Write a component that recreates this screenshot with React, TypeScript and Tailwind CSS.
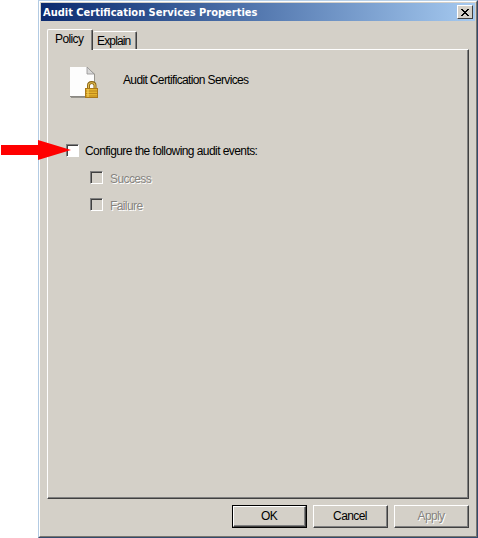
import React from "react";

type CheckProps = { label: string; disabled?: boolean; className: string };

function CheckRow({ label, disabled, className }: CheckProps) {
  return (
    <label className={`flex h-[13px] items-center ${className}`}>
      <span
        className={`block size-[13px] shrink-0 border border-t-[#808080] border-l-[#808080] border-r-white border-b-white ${disabled ? "bg-[#d4d0c8]" : "bg-white"}`}
      >
        <span className="block size-full border-t border-l border-[#404040]" />
      </span>
      <span
        className={`whitespace-nowrap leading-[13px] ${disabled ? "mt-[3px] ml-[7px] tracking-[-0.6px] text-[#868480] [text-shadow:1px_1px_0_#fff]" : "mt-0.5 ml-1.5 tracking-[-0.57px]"}`}
      >
        {label}
      </span>
    </label>
  );
}

function DialogButton({ label, disabled, primary }: { label: string; disabled?: boolean; primary?: boolean }) {
  return (
    <button className={`block h-[23px] w-[75px] tracking-[-0.6px] ${primary ? "border border-black" : ""}`}>
      <span className="block size-full border border-t-white border-l-white border-r-[#404040] border-b-[#404040]">
        <span
          className={`flex size-full items-center justify-center border-r border-b border-[#808080] leading-4 ${disabled ? "text-[#868480] [text-shadow:1px_1px_0_#fff]" : ""}`}
        >
          {label}
        </span>
      </span>
    </button>
  );
}

function PolicyIcon() {
  return (
    <svg width="32" height="34" viewBox="0 0 32 34" className="block shrink-0">
      <path d="M1 2H18L25 8V32H1Z" fill="#77756f" opacity=".65" />
      <path d="M0 1H17L24 8V30H0Z" fill="#fdfdfd" />
      <path d="M0 30.5H24" stroke="#8a8883" />
      <path d="M17 1V8H24Z" fill="#d9d9d9" stroke="#92918f" strokeWidth=".8" />
      <path d="M18.5 23V19.5C18.5 15.5 25 15.5 25 19.5V23" fill="none" stroke="#8a6512" strokeWidth="3" />
      <path d="M18.5 23V19.5C18.5 15.8 25 15.8 25 19.5V23" fill="none" stroke="#e3bd55" strokeWidth="1.2" />
      <rect x="15.5" y="22.5" width="12" height="9" fill="#e5b32d" stroke="#aa7819" />
      <path d="M16 25H27M16 27.5H27M16 30H27" stroke="#bb861b" />
      <path d="M18 23V31" stroke="#f6d668" />
    </svg>
  );
}

export default function App() {
  return (
    <div className="relative h-[538px] w-[478px] overflow-hidden bg-white pl-[38px] font-['Liberation_Sans',Arial,sans-serif] text-[12px] text-black">
      <div className="flex h-[538px] flex-col border-t border-r border-b border-l border-t-[#b8d0e8] border-r-[#34496a] border-b-[#34496a] border-l-[#b3cbe3]">
        <div className="flex min-h-0 flex-1 flex-col border border-t-white border-r-[#77756f] border-b-[#77756f] border-l-white bg-[#d4d0c8] pt-px">
          <header className="mx-px flex h-[18px] shrink-0 items-center justify-between bg-linear-to-r from-[#0b2a6f] to-[#a6caf0] pr-0.5 pl-0.5 text-white">
            <h1 className="pt-px font-['DejaVu_Sans_Condensed','DejaVu_Sans',sans-serif] text-[11px] leading-[18px] font-bold whitespace-nowrap">
              Audit Certification Services Properties
            </h1>
            <button
              aria-label="Close"
              className="flex h-[14px] w-4 items-center justify-center border border-t-white border-l-white border-r-[#404040] border-b-[#404040] bg-[#d4d0c8]"
            >
              <svg width="8" height="7" viewBox="0 0 8 7" shapeRendering="crispEdges">
                <path d="M0 0h2v1h1v1h2V1h1V0h2v1H7v1H6v1H5v1h1v1h1v1h1v1H6V6H5V5H3v1H2v1H0V6h1V5h1V4h1V3H2V2H1V1H0z" fill="#000" />
              </svg>
            </button>
          </header>

          <main className="mr-[7px] ml-[7px] pt-2">
            <div className="flex h-5 items-end">
              <div className="z-10 h-[21px] w-[46px] translate-y-px rounded-t-[2px] border-t border-r border-l border-t-white border-r-[#404040] border-l-white bg-[#d4d0c8]">
                <div className="h-full border-r border-[#808080] pl-[7px] leading-[19px] tracking-[-0.6px]">Policy</div>
              </div>
              <div className="h-[18px] w-11 rounded-t-[2px] border-t border-r border-t-white border-r-[#404040]">
                <div className="h-full border-r border-[#808080] pl-1 leading-[19px] tracking-[-0.85px]">Explain</div>
              </div>
            </div>
            <section className="h-[450px] border border-t-white border-r-[#404040] border-b-[#404040] border-l-white">
              <div className="h-full border-r border-b border-[#808080] pt-4 pl-[18px]">
                <div className="flex h-[34px] items-start pl-[4px]">
                  <PolicyIcon />
                  <span className="mt-[7px] ml-[21px] leading-[14px] tracking-[-0.64px] whitespace-nowrap">Audit Certification Services</span>
                </div>
                <CheckRow label="Configure the following audit events:" className="mt-11" />
                <CheckRow label="Success" disabled className="mt-3.5 ml-6" />
                <CheckRow label="Failure" disabled className="mt-3.5 ml-6" />
              </div>
            </section>
          </main>

          <footer className="mt-1.5 mr-[7px] flex justify-end gap-1.5">
            <DialogButton label="OK" primary />
            <DialogButton label="Cancel" />
            <DialogButton label="Apply" disabled />
          </footer>
        </div>
      </div>
      <svg className="absolute top-[140px] left-px" width="71" height="20" viewBox="0 0 71 20">
        <path d="M0 5H37V0L70 10L37 20V15H0Z" fill="#f00" />
      </svg>
    </div>
  );
}
